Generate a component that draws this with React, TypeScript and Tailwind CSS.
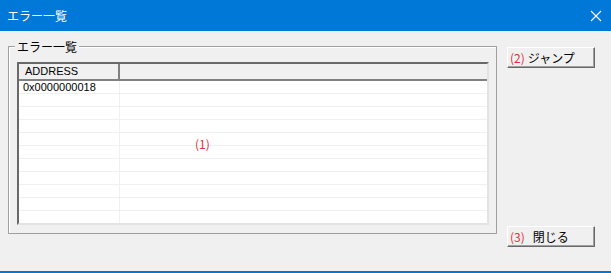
import React from 'react';

const rows = ['0x0000000018', '', '', '', '', '', '', '', '', '', '', ''];

const Button: React.FC<{ num: string; label: string; gap: string }> = ({ num, label, gap }) => (
    <div className="w-[88px] h-[21px] shrink-0 bg-[#f0f0f0] border border-t-white border-l-white border-r-[#696969] border-b-[#696969] shadow-[inset_-1px_-1px_0_#a0a0a0] flex items-center pl-[2px] text-[12px] leading-none">
        <span className="text-[#e0303a]">{num}</span>
        <span className={`text-black ${gap}`}>{label}</span>
    </div>
);

const App: React.FC = () => {
    return (
        <div
            className="w-[611px] h-[273px] bg-[#f0f0f0] flex flex-col overflow-hidden"
            style={{ fontFamily: '"Noto Sans CJK JP", "Liberation Sans", sans-serif' }}
        >
            {/* Title bar */}
            <div className="h-[31px] bg-[#0078d7] flex items-center justify-between pl-[7px] pr-[8px] shrink-0">
                <span className="text-white text-[12px] leading-none">エラー一覧</span>
                <svg width="12" height="12" viewBox="0 0 12 12" className="mr-[1px]">
                    <path d="M1 1 L11 11 M11 1 L1 11" stroke="white" strokeWidth="1.1" />
                </svg>
            </div>

            {/* Body */}
            <div className="flex px-[8px] pt-[15px] gap-[10px] h-[216px]">
                {/* Group box */}
                <div className="relative shrink-0 w-[489px] h-[188px] border border-[#a0a0a0] shadow-[inset_1px_1px_0_#ffffff] pt-[15px] px-[8px] pb-[8px]">
                    <span className="absolute -top-[8px] left-[6px] bg-[#f0f0f0] px-[2px] text-[12px] leading-[16px] text-black">
                        エラー一覧
                    </span>

                    {/* List view */}
                    <div className="relative w-[472px] h-[163px] bg-white border-2 border-t-[#696969] border-l-[#696969] border-r-[#e3e3e3] border-b-[#e3e3e3] overflow-hidden">
                        <div className="flex h-[17px] bg-[#f0f0f0] border-b-2 border-[#808080]">
                            <div className="w-[101px] border-r-2 border-[#808080] pl-[6px] flex items-center text-[11px] text-black" style={{ fontFamily: '"Liberation Sans", sans-serif' }}>
                                ADDRESS
                            </div>
                            <div className="flex-1" />
                        </div>
                        {rows.map((r, i) => (
                            <div key={i} className="flex h-[13px] border-b border-[#f0f0f0]">
                                <div
                                    className="w-[101px] border-r border-[#f0f0f0] pl-[4px] text-[11px] leading-[12px] text-black"
                                    style={{ fontFamily: '"Liberation Sans", sans-serif' }}
                                >
                                    {r}
                                </div>
                                <div className="flex-1" />
                            </div>
                        ))}
                        <span className="absolute left-[176px] top-[74px] text-[12px] leading-none text-[#e0303a]">(1)</span>
                    </div>
                </div>

                {/* Buttons */}
                <div className="w-[88px] shrink-0 flex flex-col items-start justify-between pt-[1px]">
                    <Button num="(2)" label="ジャンプ" gap="ml-[3px]" />
                    <Button num="(3)" label="閉じる" gap="ml-[8px]" />
                </div>
            </div>

            <div className="flex-1" />
            <div className="h-[2px] bg-[#0078d7] shrink-0" />
        </div>
    );
};

export default App;
